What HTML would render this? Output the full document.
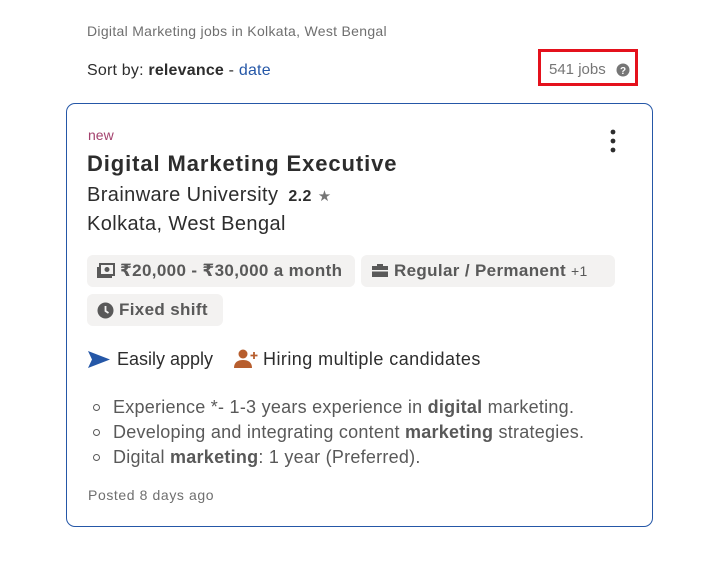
<!DOCTYPE html>
<html><head><meta charset="utf-8"><style>
*{margin:0;padding:0;box-sizing:border-box}
body{width:726px;height:587px;background:#fff;font-family:"Liberation Sans","DejaVu Sans",sans-serif;color:#2d2d2d;position:relative;overflow:hidden}
.abs{position:absolute;white-space:nowrap}
.chip{position:absolute;background:#f3f2f1;border-radius:6px;height:32px;font-weight:bold;font-size:17px;letter-spacing:0.35px;color:#595959;display:flex;align-items:center;padding:0 10px;white-space:nowrap}
.chip svg{margin-right:5px}
ul{position:absolute;left:113px;top:396px;list-style:none;font-size:18px;letter-spacing:0.25px;color:#595959}
ul li{height:25px;line-height:22px;position:relative}
ul li:before{content:"";position:absolute;left:-20px;top:8px;width:5px;height:5px;border:1.5px solid #595959;border-radius:50%}
b{color:#595959}
</style></head><body>
<div class="abs" style="left:87px;top:23px;font-size:14px;letter-spacing:0.3px;color:#6f6f6f">Digital Marketing jobs in Kolkata, West Bengal</div>
<div class="abs" style="left:87px;top:62px;font-size:16px;letter-spacing:0.2px;color:#2d2d2d">Sort by: <b style="color:#2d2d2d">relevance</b> - <span style="color:#2557a7">date</span></div>
<div class="abs" style="left:538px;top:49px;width:100px;height:37px;border:3px solid #e4111c"></div>
<div class="abs" style="left:549px;top:61px;font-size:15px;color:#767676">541 jobs</div>
<svg class="abs" style="left:616px;top:63px" width="14" height="14" viewBox="0 0 14 14"><circle cx="7" cy="7" r="6.5" fill="#767676"/><text x="7" y="11" font-size="10" font-weight="bold" text-anchor="middle" fill="#fff" font-family="Liberation Sans">?</text></svg>
<div class="abs" style="left:66px;top:103px;width:587px;height:424px;border:1px solid #2557a7;border-radius:9px"></div>
<svg class="abs" style="left:609px;top:129px" width="8" height="24"><circle cx="4" cy="3" r="2.4" fill="#2d2d2d"/><circle cx="4" cy="12" r="2.4" fill="#2d2d2d"/><circle cx="4" cy="21" r="2.4" fill="#2d2d2d"/></svg>
<div class="abs" style="left:88px;top:127px;font-size:14px;color:#a4426e">new</div>
<div class="abs" style="left:87px;top:151px;font-size:22px;letter-spacing:0.9px;font-weight:bold;color:#2d2d2d">Digital Marketing Executive</div>
<div class="abs" style="left:87px;top:184px;font-size:20px;letter-spacing:0.4px;color:#2d2d2d">Brainware University <span style="font-size:16px;font-weight:bold;margin-left:4px">2.2</span> <span style="color:#767676;font-size:15px">★</span></div>
<div class="abs" style="left:87px;top:213px;font-size:20px;letter-spacing:0.4px;color:#2d2d2d">Kolkata, West Bengal</div>
<div class="chip" style="left:87px;top:255px;width:268px"><svg width="18" height="16" viewBox="0 0 18 16"><rect x="3" y="1" width="14" height="11" fill="none" stroke="#595959" stroke-width="2"/><circle cx="10" cy="6.5" r="2.5" fill="#595959"/><path d="M1 4v10h14" fill="none" stroke="#595959" stroke-width="2"/></svg>₹20,000 - ₹30,000 a month</div>
<div class="chip" style="left:361px;top:255px;width:254px"><svg width="18" height="16" viewBox="0 0 18 16"><path d="M6 3V1h6v2h5v11H1V3z" fill="#595959"/><rect x="1" y="7" width="16" height="1.5" fill="#f3f2f1"/></svg>Regular / Permanent <span style="font-weight:normal;font-size:14px;margin-left:5px">+1</span></div>
<div class="chip" style="left:87px;top:294px;width:136px"><svg width="17" height="17" viewBox="0 0 17 17"><circle cx="8.5" cy="8.5" r="8" fill="#595959"/><path d="M8.5 4v5l3 2" stroke="#f3f2f1" stroke-width="1.8" fill="none"/></svg>Fixed shift</div>
<svg class="abs" style="left:88px;top:351px" width="22" height="17" viewBox="0 0 22 17"><path d="M0 0L22 8.5L0 17L4 8.5z" fill="#2557a7"/></svg>
<div class="abs" style="left:117px;top:349px;font-size:18px;color:#2d2d2d">Easily apply</div>
<svg class="abs" style="left:234px;top:349px" width="24" height="20" viewBox="0 0 24 20"><circle cx="9" cy="5" r="4.5" fill="#b75e2e"/><path d="M0 19c0-6 4-8 9-8s9 2 9 8z" fill="#b75e2e"/><path d="M20 3v7M16.5 6.5h7" stroke="#b75e2e" stroke-width="1.8"/></svg>
<div class="abs" style="left:263px;top:349px;font-size:18px;letter-spacing:0.45px;color:#2d2d2d">Hiring multiple candidates</div>
<ul>
<li>Experience *- 1-3 years experience in <b>digital</b> marketing.</li>
<li>Developing and integrating content <b>marketing</b> strategies.</li>
<li>Digital <b>marketing</b>: 1 year (Preferred).</li>
</ul>
<div class="abs" style="left:88px;top:487px;font-size:14px;letter-spacing:0.6px;color:#6f6f6f">Posted 8 days ago</div>
</body></html>
